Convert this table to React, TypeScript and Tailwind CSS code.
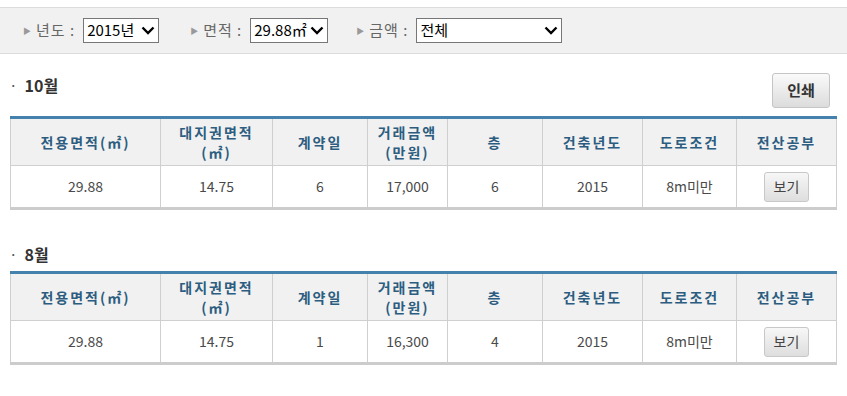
const FONT = { fontFamily: '"Noto Sans CJK KR", "Liberation Sans", sans-serif' };

const headers: { label: string[]; w: string }[] = [
    { label: ['전용면적(㎡)'], w: 'w-[150px]' },
    { label: ['대지권면적', '(㎡)'], w: 'w-[112px]' },
    { label: ['계약일'], w: 'w-[95px]' },
    { label: ['거래금액', '(만원)'], w: 'w-[80px]' },
    { label: ['층'], w: 'w-[95px]' },
    { label: ['건축년도'], w: 'w-[100px]' },
    { label: ['도로조건'], w: 'w-[94px]' },
    { label: ['전산공부'], w: 'w-[100px]' },
];

const sections = [
    { month: '10월', print: true, row: ['29.88', '14.75', '6', '17,000', '6', '2015', '8m미만'] },
    { month: '8월', print: false, row: ['29.88', '14.75', '1', '16,300', '4', '2015', '8m미만'] },
];

function Chevron() {
    return (
        <svg width="14" height="9" viewBox="0 0 14 9" className="shrink-0">
            <path d="M1.5 1.5 L7 7 L12.5 1.5" fill="none" stroke="#000" strokeWidth="2.4" />
        </svg>
    );
}

function Filter({ label, value, width, className }: { label: string; value: string; width: string; className?: string }) {
    return (
        <div className={`flex items-center ${className ?? ''}`}>
            <span className="text-[8px] text-[#999] mr-[5px] leading-none">▶</span>
            <span className="text-[15px] text-[#666] mr-[8px] tracking-[1px]">{label} :</span>
            <div className={`${width} h-[25px] border border-[#777] bg-white flex items-center justify-between pl-[3px] pr-[3px]`}>
                <span className="text-[15px] text-black">{value}</span>
                <Chevron />
            </div>
        </div>
    );
}

function Section({ month, print, row }: { month: string; print: boolean; row: string[] }) {
    return (
        <div className={print ? 'pt-[19px]' : 'pt-[34px]'}>
            <div className={`flex justify-between items-start px-[10px] ${print ? 'h-[35px] mb-[8px]' : 'h-[20px] mb-[7px]'}`}>
                <h2 className={`flex items-center text-[16px] font-bold text-[#333] leading-[20px] ${print ? 'pt-[2px]' : ''}`}>
                    <span className="text-[11px] text-[#555] mr-[8px]">·</span>
                    {month}
                </h2>
                {print && (
                    <button className="mr-[7px] w-[58px] h-[35px] rounded-[3px] border border-[#c5c5c5] bg-gradient-to-b from-[#fafafa] to-[#dcdcdc] text-[15px] font-bold text-[#333]">
                        인쇄
                    </button>
                )}
            </div>
            <table className="mx-[10px] w-[826px] table-fixed border-collapse border-t-[3px] border-t-[#4481ad] border-b-[3px] border-b-[#cccccc]">
                <thead>
                    <tr className="h-[48px] bg-[#f1f1f1]">
                        {headers.map((h, i) => (
                            <th key={i} className={`${h.w} border border-[#cfcfcf] border-t-0 p-0 text-[14px] font-bold text-[#2c5d80] tracking-[2px] leading-[20px]`}>
                                {h.label.map((l, j) => (
                                    <div key={j}>{l}</div>
                                ))}
                            </th>
                        ))}
                    </tr>
                </thead>
                <tbody>
                    <tr className="h-[43px] bg-white">
                        {row.map((v, i) => (
                            <td key={i} className="border border-[#cfcfcf] border-b-0 text-center text-[14px] text-[#4a4a4a]">
                                {v}
                            </td>
                        ))}
                        <td className="border border-[#cfcfcf] border-b-0 text-center">
                            <button className="w-[45px] h-[30px] rounded-[3px] border border-[#c8c8c8] bg-gradient-to-b from-[#f7f7f7] to-[#dedede] text-[14px] text-[#444]">
                                보기
                            </button>
                        </td>
                    </tr>
                </tbody>
            </table>
        </div>
    );
}

export default function App() {
    return (
        <div className="w-[847px] h-[396px] bg-white overflow-hidden" style={FONT}>
            <div className="mt-[7px] h-[47px] bg-[#f1f1f1] border-y border-[#dcdcdc] flex items-center pl-[23px]">
                <Filter label="년도" value="2015년" width="w-[76px]" />
                <Filter label="면적" value="29.88㎡" width="w-[78px]" className="ml-[31px]" />
                <Filter label="금액" value="전체" width="w-[146px]" className="ml-[28px]" />
            </div>
            {sections.map((s) => (
                <Section key={s.month} {...s} />
            ))}
        </div>
    );
}
